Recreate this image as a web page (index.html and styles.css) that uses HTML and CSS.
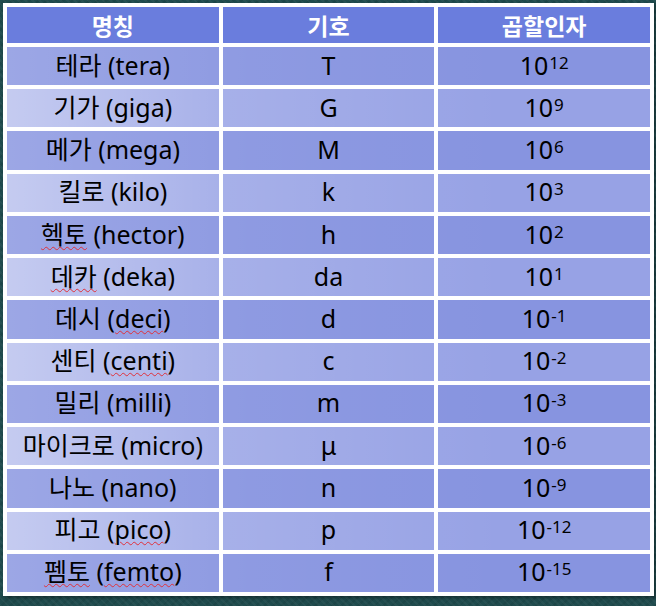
FILE: index.html
```html
<!DOCTYPE html>
<html lang="ko">
<head>
<meta charset="utf-8">
<title>SI 접두어</title>
<link rel="stylesheet" href="styles.css">
</head>
<body>
<div class="frame">
  <div class="table">
    <div class="cell head"><span>명칭</span></div>
    <div class="cell head"><span>기호</span></div>
    <div class="cell head"><span>곱할인자</span></div>

    <div class="cell odd"><span>테라 (tera)</span></div>
    <div class="cell odd"><span>T</span></div>
    <div class="cell odd"><span>10<span class="sup">12</span></span></div>

    <div class="cell even"><span>기가 (giga)</span></div>
    <div class="cell even"><span>G</span></div>
    <div class="cell even"><span>10<span class="sup">9</span></span></div>

    <div class="cell odd"><span>메가 (mega)</span></div>
    <div class="cell odd"><span>M</span></div>
    <div class="cell odd"><span>10<span class="sup">6</span></span></div>

    <div class="cell even"><span>킬로 (kilo)</span></div>
    <div class="cell even"><span>k</span></div>
    <div class="cell even"><span>10<span class="sup">3</span></span></div>

    <div class="cell odd"><span><span class="spell">헥토</span> (hector)</span></div>
    <div class="cell odd"><span>h</span></div>
    <div class="cell odd"><span>10<span class="sup">2</span></span></div>

    <div class="cell even"><span><span class="spell">데카</span> (deka)</span></div>
    <div class="cell even"><span>da</span></div>
    <div class="cell even"><span>10<span class="sup">1</span></span></div>

    <div class="cell odd"><span>데시 (<span class="spell">deci</span>)</span></div>
    <div class="cell odd"><span>d</span></div>
    <div class="cell odd"><span>10<span class="sup">-1</span></span></div>

    <div class="cell even"><span>센티 (<span class="spell">centi</span>)</span></div>
    <div class="cell even"><span>c</span></div>
    <div class="cell even"><span>10<span class="sup">-2</span></span></div>

    <div class="cell odd"><span>밀리 (milli)</span></div>
    <div class="cell odd"><span>m</span></div>
    <div class="cell odd"><span>10<span class="sup">-3</span></span></div>

    <div class="cell even"><span>마이크로 (micro)</span></div>
    <div class="cell even"><span>μ</span></div>
    <div class="cell even"><span>10<span class="sup">-6</span></span></div>

    <div class="cell odd"><span>나노 (nano)</span></div>
    <div class="cell odd"><span>n</span></div>
    <div class="cell odd"><span>10<span class="sup">-9</span></span></div>

    <div class="cell even"><span>피고 (<span class="spell">pico</span>)</span></div>
    <div class="cell even"><span>p</span></div>
    <div class="cell even"><span>10<span class="sup">-12</span></span></div>

    <div class="cell odd"><span><span class="spell">펨토</span> (<span class="spell">femto</span>)</span></div>
    <div class="cell odd"><span>f</span></div>
    <div class="cell odd"><span>10<span class="sup">-15</span></span></div>
  </div>
</div>
</body>
</html>
```

FILE: styles.css
```css
html, body {
  margin: 0;
  padding: 0;
}

body {
  width: 656px;
  height: 606px;
  overflow: hidden;
  background-color: #1f4b4d;
  background-image:
    repeating-linear-gradient(45deg, rgba(255,255,255,0.035) 0 2px, rgba(0,0,0,0) 2px 5px),
    repeating-linear-gradient(-45deg, rgba(0,0,0,0.07) 0 2px, rgba(0,0,0,0) 2px 6px);
  font-family: "Noto Sans", "Noto Sans CJK KR", sans-serif;
}

.frame {
  padding: 3px 0 0 3px;
}

.table {
  box-sizing: border-box;
  width: 651px;
  height: 593px;
  padding: 4px;
  background: #ffffff;
  display: grid;
  grid-template-columns: repeat(3, 1fr);
  grid-template-rows: 36px repeat(13, 1fr);
  gap: 4px;
  box-shadow: 2px 2px 3px rgba(0, 0, 0, 0.35);
}

.cell {
  display: flex;
  align-items: center;
  justify-content: center;
  font-size: 25px;
  line-height: 30px;
  color: #000000;
  white-space: nowrap;
  padding-bottom: 3px;
  box-sizing: border-box;
}

.head {
  background: #6a7ddd;
  color: #ffffff;
  font-weight: 700;
  font-size: 23px;
  font-family: "Noto Sans CJK KR", sans-serif;
  padding-bottom: 1px;
}

.odd {
  background-color: #8794e0;
  background-image: linear-gradient(to right, rgba(255,255,255,0.18) 0px, rgba(255,255,255,0.06) 250px, rgba(255,255,255,0) 500px);
  background-attachment: fixed;
}

.even {
  background-color: #97a2e5;
  background-image: linear-gradient(to right, rgba(255,255,255,0.45) 0px, rgba(255,255,255,0.15) 230px, rgba(255,255,255,0) 500px);
  background-attachment: fixed;
}

.sup {
  font-size: 17px;
  vertical-align: 6px;
  line-height: 0;
  margin-left: 1px;
}

.spell {
  text-decoration: underline wavy #e0303a;
  text-decoration-thickness: 1px;
  text-underline-offset: 2px;
}
```
